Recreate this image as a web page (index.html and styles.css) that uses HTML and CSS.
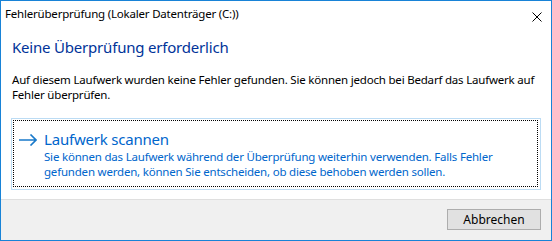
FILE: index.html
```html
<!DOCTYPE html>
<html lang="de">
<head>
<meta charset="UTF-8">
<title>Fehlerüberprüfung</title>
<link rel="stylesheet" href="styles.css">
</head>
<body>

<div class="window">

<!-- Titelleiste -->
<div class="titlebar">
    <span class="title">Fehlerüberprüfung (Lokaler Datenträger (C:))</span>
    <svg class="close" width="10" height="10" viewBox="0 0 10 10">
        <path d="M0.5 0.5 L9.5 9.5 M9.5 0.5 L0.5 9.5" stroke="#000" stroke-width="1" fill="none"/>
    </svg>
</div>

<!-- Inhalt -->
<div class="content">
    <h1 class="instruction">Keine Überprüfung erforderlich</h1>
    <p class="message">Auf diesem Laufwerk wurden keine Fehler gefunden. Sie können jedoch bei Bedarf das Laufwerk auf<br>Fehler überprüfen.</p>

    <div class="command-link">
        <div class="focus">
            <svg class="arrow" width="18" height="12" viewBox="0 0 18 12">
                <path d="M0 6 H17 M11.5 0.5 L17 6 L11.5 11.5" stroke="#1979ca" stroke-width="1.6" fill="none"/>
            </svg>
            <div class="link-text">
                <div class="link-title">Laufwerk scannen</div>
                <div class="link-note">Sie können das Laufwerk während der Überprüfung weiterhin verwenden. Falls Fehler<br>gefunden werden, können Sie entscheiden, ob diese behoben werden sollen.</div>
            </div>
        </div>
    </div>
</div>

<!-- Fußzeile -->
<div class="footer">
    <button class="btn">Abbrechen</button>
</div>

</div>

</body>
</html>
```

FILE: styles.css
```css
body {margin:0;font-family:"Noto Sans","Liberation Sans",sans-serif;font-size:11.5px;letter-spacing:-0.2px;color:#000;}
.window {width:552px;height:241px;box-sizing:border-box;border:1px solid #1883d7;background:#fff;display:flex;flex-direction:column;}

.titlebar {height:29px;display:flex;justify-content:space-between;align-items:flex-start;padding:5px 0 0 4px;box-sizing:border-box;}
.title {line-height:16px;}
.close {margin:6px 9px 0 0;}

.content {flex:1;padding:0 10px;}
.instruction {margin:7px 0 0 1px;font-size:15px;letter-spacing:-0.2px;font-weight:normal;line-height:21px;color:#003399;}
.message {margin:14px 0 0 1px;line-height:15px;white-space:nowrap;}

.command-link {margin-top:16px;border:1px solid #bcdcf4;padding:1px 2px 2px 1px;}
.focus {border:1px dotted #000;display:flex;align-items:flex-start;padding:8px 0 7px 5px;}
.arrow {margin-top:5px;flex-shrink:0;}
.link-text {margin-left:7px;color:#0066cc;}
.link-title {font-size:15px;letter-spacing:-0.2px;line-height:20px;}
.link-note {line-height:15px;letter-spacing:-0.2px;white-space:nowrap;}

.footer {height:41px;box-sizing:border-box;border-top:1px solid #dfdfdf;background:#f0f0f0;display:flex;justify-content:flex-end;align-items:flex-start;padding:9px 10px 0 0;}
.btn {width:94px;height:21px;padding:0;background:#e1e1e1;border:1px solid #adadad;font-family:inherit;font-size:12px;letter-spacing:0;color:#000;}
```
